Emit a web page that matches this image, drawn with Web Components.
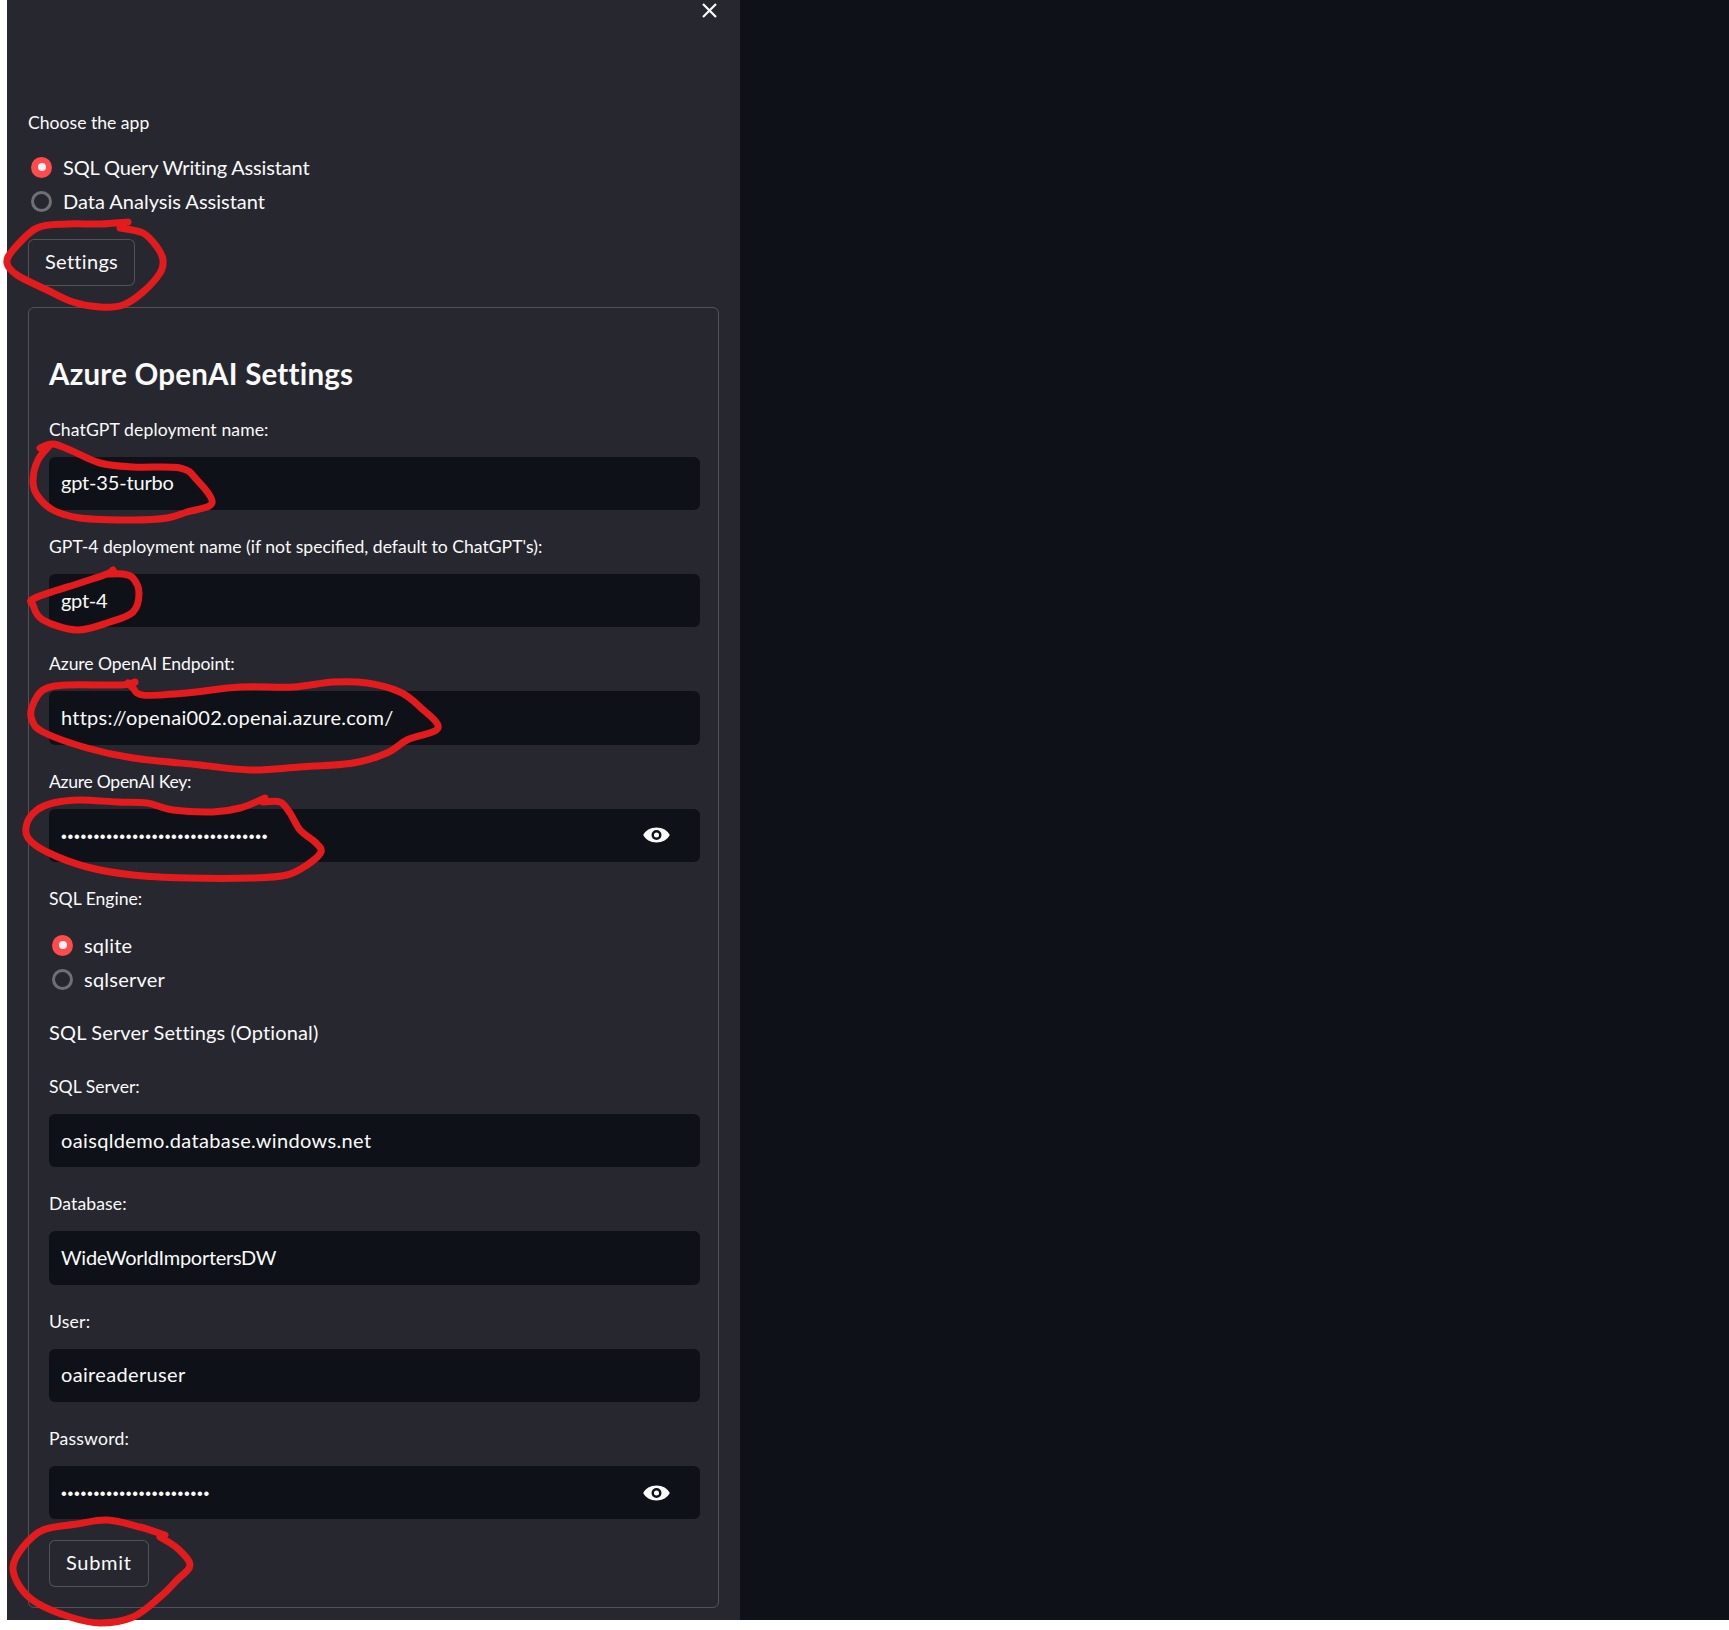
<!DOCTYPE html>
<html>
<head>
<meta charset="utf-8">
<title>Settings</title>
<style>
    html, body { margin: 0; background: #fff; }
    body { font-family: "Lato", "Liberation Sans", sans-serif; color: #fafafa; }
</style>
</head>
<body>
<app-shell>
    <radio-group label="Choose the app" slot="top" options="SQL Query Writing Assistant|Data Analysis Assistant" spacing="-.16|0"></radio-group>
    <st-button slot="top" style="margin-top:21px;letter-spacing:.3px">Settings</st-button>
    <settings-card slot="top" style="margin-top:21px">
        <h-title>Azure OpenAI Settings</h-title>
        <st-field label="ChatGPT deployment name:" style="--ls:-.18px;--label-ls:.1px">gpt-35-turbo</st-field>
        <st-field label="GPT-4 deployment name (if not specified, default to ChatGPT's):" style="--ls:-.3px">gpt-4</st-field>
        <st-field label="Azure OpenAI Endpoint:" style="--ls:.25px;--label-ls:-.1px">https://openai002.openai.azure.com/</st-field>
        <st-field label="Azure OpenAI Key:" password style="--label-ls:-.3px">••••••••••••••••••••••••••••••••</st-field>
        <radio-group label="SQL Engine:" options="sqlite|sqlserver" spacing=".2|.24" style="--label-gap:17.2px"></radio-group>
        <sub-title>SQL Server Settings (Optional)</sub-title>
        <st-field label="SQL Server:" style="--ls:.35px">oaisqldemo.database.windows.net</st-field>
        <st-field label="Database:" style="--ls:-.27px;--label-ls:.1px">WideWorldImportersDW</st-field>
        <st-field label="User:" style="--ls:.34px;--label-ls:.2px">oaireaderuser</st-field>
        <st-field label="Password:" password style="--label-ls:.2px">•••••••••••••••••••••••</st-field>
        <st-button style="margin-top:21px;letter-spacing:.7px">Submit</st-button>
    </settings-card>
</app-shell>
<red-marks></red-marks>

<script>
class AppShell extends HTMLElement {
    constructor() {
        super();
        this.attachShadow({mode: 'open'});
        this.shadowRoot.innerHTML = `
            <style>
                :host { display: grid; grid-template-columns: 7px 733px 1fr; height: 1620px; background: #fff; }
                .side { position: relative; background: #272730; padding: 111px 21px 0; box-sizing: border-box; display: flex; flex-direction: column; align-items: flex-start; }
                .main { background: #0e1117; }
                .close { position: absolute; left: 694.5px; top: 2.5px; width: 15px; height: 15px; }
            </style>
            <div></div>
            <div class="side">
                <svg class="close" viewBox="0 0 15 15"><path d="M1 1L14 14M14 1L1 14" stroke="#fafafa" stroke-width="2.2" fill="none"/></svg>
                <slot name="top"></slot>
            </div>
            <div class="main"></div>
        `;
    }
}

class RadioGroup extends HTMLElement {
    constructor() {
        super();
        this.attachShadow({mode: 'open'});
    }
    connectedCallback() {
        const spacing = (this.getAttribute('spacing') || '').split('|');
        const rows = this.getAttribute('options').split('|').map((text, i) => `
            <div class="row">
                <span class="dot ${i === 0 ? 'on' : ''}"></span>
                <span style="letter-spacing:${spacing[i] || 0}px">${text}</span>
            </div>`).join('');
        this.shadowRoot.innerHTML = `
            <style>
                :host { display: block; }
                .label { font-size: 17.6px; line-height: 24px; margin-bottom: var(--label-gap, 15px); }
                .row { display: flex; align-items: center; height: 34px; font-size: 20px; padding-left: 3px; gap: 11px; }
                .dot { width: 21px; height: 21px; border-radius: 50%; box-sizing: border-box; border: 3px solid #6f7076; }
                .dot.on { border: 0; background: #ff4b4b; position: relative; }
                .dot.on::after { content: ""; position: absolute; left: 6.5px; top: 6.5px; width: 8px; height: 8px; border-radius: 50%; background: #f0f2f6; }
            </style>
            <div class="label">${this.getAttribute('label')}</div>
            ${rows}
        `;
    }
}

class StButton extends HTMLElement {
    constructor() {
        super();
        this.attachShadow({mode: 'open'});
        this.shadowRoot.innerHTML = `
            <style>
                :host { display: block; width: fit-content; }
                button { display: block; height: 47px; padding: 0 16px 3px; font: inherit; font-size: 20px; letter-spacing: inherit; color: #fafafa; background: #272730; border: 1px solid rgba(250,250,250,.2); border-radius: 6px; }
            </style>
            <button><slot></slot></button>
        `;
    }
}

class SettingsCard extends HTMLElement {
    constructor() {
        super();
        this.attachShadow({mode: 'open'});
        this.shadowRoot.innerHTML = `
            <style>
                :host { display: block; width: 691px; box-sizing: border-box; border: 1px solid rgba(250,250,250,.2); border-radius: 6px; padding: 21px 18px 20px 20px; }
                ::slotted(radio-group) { margin-top: 24.5px; }
            </style>
            <slot></slot>
        `;
    }
}

class HTitle extends HTMLElement {
    constructor() {
        super();
        this.attachShadow({mode: 'open'});
        this.shadowRoot.innerHTML = `
            <style>
                :host { display: block; margin: 24px 0 22.7px; font-size: 29.5px; line-height: 42px; font-weight: 700; letter-spacing: .22px; }
            </style>
            <slot></slot>
        `;
    }
}

class SubTitle extends HTMLElement {
    constructor() {
        super();
        this.attachShadow({mode: 'open'});
        this.shadowRoot.innerHTML = `
            <style>
                :host { display: block; margin: 21.3px 0 27.5px; font-size: 20px; line-height: 30px; letter-spacing: .15px; }
            </style>
            <slot></slot>
        `;
    }
}

class StField extends HTMLElement {
    constructor() {
        super();
        this.attachShadow({mode: 'open'});
    }
    connectedCallback() {
        const isPass = this.hasAttribute('password');
        this.shadowRoot.innerHTML = `
            <style>
                :host { display: block; }
                :host(:not(:last-of-type)) { margin-bottom: 25px; }
                .label { font-size: 17.6px; line-height: 24px; margin-bottom: 15px; letter-spacing: var(--label-ls, 0); }
                .box { display: flex; align-items: center; justify-content: space-between; height: 53.33px; background: #0e1117; border-radius: 6px; padding: 0 29px 0 12px; font-size: 20px; letter-spacing: var(--ls, 0); }
                .val { margin-top: -2px; }
                .pass { margin-top: 2px; font-family: "Liberation Sans", sans-serif; font-size: 16.5px; letter-spacing: .7px; }
                svg { width: 29px; height: 24px; }
            </style>
            <div class="label">${this.getAttribute('label')}</div>
            <div class="box">
                <span class="${isPass ? 'pass' : 'val'}"><slot></slot></span>
                ${isPass ? `<svg viewBox="0 0 24 24" preserveAspectRatio="none"><path fill="#fafafa" fill-rule="evenodd" d="M12 4.5C7 4.5 2.73 7.61 1 12c1.73 4.39 6 7.5 11 7.5s9.27-3.11 11-7.5c-1.73-4.39-6-7.5-11-7.5zM12 7a4.13 5 0 1 0 0 10a4.13 5 0 1 0 0-10zM12 9.5a2.1 2.5 0 1 1 0 5a2.1 2.5 0 1 1 0-5z"/></svg>` : ''}
            </div>
        `;
    }
}

// the hand drawn red circles, points read off the screenshot
const marks = [
    [[128,222],[100,224],[67,224],[37,228],[13,250],[7,263],[17,275],[47,290],[73,302],[100,307],[123,305],[143,292],[160,273],[163,260],[157,247],[143,233],[120,228]],
    [[40,448],[53,444],[70,450],[100,463],[133,467],[180,468],[197,480],[212,503],[187,512],[167,518],[133,520],[80,518],[53,510],[37,495],[33,480],[38,460],[50,445]],
    [[113,570],[107,574],[80,583],[35,598],[33,605],[43,620],[77,630],[110,622],[133,612],[139,593],[133,578],[123,574],[108,574]],
    [[135,682],[120,685],[67,685],[43,690],[32,707],[32,720],[43,732],[87,748],[133,758],[200,765],[250,770],[300,767],[353,763],[387,753],[407,740],[438,728],[420,707],[400,692],[367,683],[333,682],[293,687],[240,687],[187,693],[143,695],[133,688],[128,683]],
    [[265,798],[240,808],[213,812],[173,810],[147,803],[117,802],[80,800],[53,803],[37,810],[27,823],[28,838],[47,852],[87,867],[133,875],[187,878],[253,878],[287,875],[307,865],[321,852],[315,842],[300,830],[290,813],[280,802],[263,802]],
    [[165,1535],[140,1527],[107,1520],[77,1524],[43,1530],[23,1547],[13,1567],[20,1587],[37,1603],[70,1617],[100,1623],[133,1617],[160,1597],[177,1580],[190,1565],[177,1548],[160,1537]]
];

class RedMarks extends HTMLElement {
    constructor() {
        super();
        this.attachShadow({mode: 'open'});
    }
    smooth(pts) {
        let d = `M${pts[0][0]} ${pts[0][1]}`;
        for (let i = 0; i < pts.length - 1; i++) {
            const p0 = pts[i - 1] || pts[i], p1 = pts[i], p2 = pts[i + 1], p3 = pts[i + 2] || p2;
            const c1 = [p1[0] + (p2[0] - p0[0]) / 6, p1[1] + (p2[1] - p0[1]) / 6];
            const c2 = [p2[0] - (p3[0] - p1[0]) / 6, p2[1] - (p3[1] - p1[1]) / 6];
            d += `C${c1[0]} ${c1[1]} ${c2[0]} ${c2[1]} ${p2[0]} ${p2[1]}`;
        }
        return d;
    }
    connectedCallback() {
        const paths = marks.map(m => `<path d="${this.smooth(m)}"/>`).join('');
        this.shadowRoot.innerHTML = `
            <style>
                :host { position: absolute; left: 0; top: 0; width: 1729px; height: 1630px; pointer-events: none; }
                svg { display: block; }
                path { fill: none; stroke: #e31b1c; stroke-width: 7; stroke-linecap: round; stroke-linejoin: round; }
            </style>
            <svg width="1729" height="1630">${paths}</svg>
        `;
    }
}

customElements.define('app-shell', AppShell);
customElements.define('radio-group', RadioGroup);
customElements.define('st-button', StButton);
customElements.define('settings-card', SettingsCard);
customElements.define('h-title', HTitle);
customElements.define('sub-title', SubTitle);
customElements.define('st-field', StField);
customElements.define('red-marks', RedMarks);
</script>
</body>
</html>
